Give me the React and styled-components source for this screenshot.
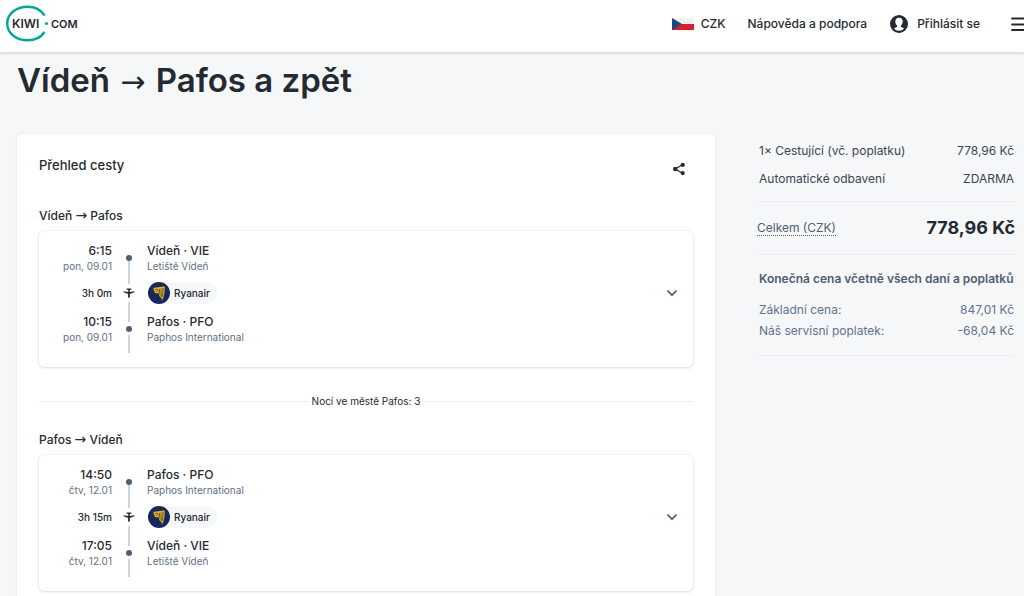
import React from "react";
import styled, { createGlobalStyle } from "styled-components";

const GlobalStyle = createGlobalStyle`
  * {
    box-sizing: border-box;
  }
  body {
    margin: 0;
    background: #f5f7f9;
    color: #252a31;
    font-family: Inter, "Noto Sans", "Liberation Sans", sans-serif;
    font-size: 12px;
    line-height: 16px;
    overflow-x: hidden;
  }
  h1, h2, h3, p, dl, dd {
    margin: 0;
  }
  button {
    border: 0;
    padding: 0;
    background: none;
    color: inherit;
    font: inherit;
    cursor: pointer;
  }
  svg {
    display: block;
    flex: none;
  }
`;

const Header = styled.header`
  display: flex;
  align-items: center;
  justify-content: space-between;
  height: 52px;
  padding: 0 0 5px 6px;
  overflow: hidden;
  background: #fff;
`;

const HeaderShadow = styled.div`
  box-shadow: 0 1px 3px rgba(37, 42, 49, 0.2);
`;

const Nav = styled.nav`
  display: flex;
  align-items: center;
  margin-right: -10px;
`;

const NavButton = styled.button`
  display: flex;
  align-items: center;
  gap: ${(props) => props.$gap || 0}px;
  margin-left: ${(props) => props.$space || 0}px;
  font-weight: 500;
`;

const NavLink = styled.a`
  margin-left: 22px;
  color: inherit;
  font-weight: 500;
  text-decoration: none;
`;

const Title = styled.h1`
  padding: 6px 17px 0;
  font-size: 33px;
  font-weight: 600;
  line-height: 44px;
`;

const Arrow = styled.span`
  margin: 0 ${(props) => props.$space || 0}px;
  font-family: "DejaVu Sans", sans-serif;
  font-size: ${(props) => props.$size}px;
  font-weight: 400;
  line-height: 1;
`;

const Layout = styled.main`
  display: grid;
  grid-template-columns: minmax(0, 698fr) minmax(0, 258fr);
  gap: 42px;
  padding: 32px 9px 0 17px;
`;

const Overview = styled.section`
  padding: 20px 22px 40px;
  background: #fff;
  border-radius: 3px;
  box-shadow: 0 0 2px rgba(37, 42, 49, 0.16);
`;

const OverviewHead = styled.div`
  display: flex;
  justify-content: space-between;
  align-items: flex-end;
  height: 24px;
  margin-bottom: 30px;
  padding-right: 7px;
`;

const Heading = styled.h2`
  padding-bottom: 5px;
  font-size: 13px;
  font-weight: 500;
`;

const ShareButton = styled.button`
  padding-bottom: 2px;
`;

const Route = styled.h3`
  margin-bottom: 7px;
  font-size: 12px;
  font-weight: 500;
`;

const Segment = styled.article`
  display: flex;
  align-items: center;
  justify-content: space-between;
  padding: 11px 15px 14px 8px;
  background: #fff;
  border-radius: 5px;
  box-shadow: 0 0 2px rgba(37, 42, 49, 0.14), 0 1px 3px rgba(37, 42, 49, 0.14);
`;

const Toggle = styled.button`
  padding-bottom: 9px;
`;

const Row = styled.div`
  display: grid;
  grid-template-columns: 65px 35px auto;
  height: ${(props) => (props.$short ? 31 : 40)}px;
`;

const Cell = styled.div`
  text-align: ${(props) => props.$align || "left"};
`;

const Main = styled.p`
  font-size: 12px;
  font-weight: 500;
  line-height: 17px;
`;

const Sub = styled.p`
  color: #5f6f82;
  font-size: 10px;
  line-height: 15px;
`;

const Duration = styled.p`
  font-size: 10px;
  font-weight: 500;
  line-height: 22px;
`;

const Track = styled.div`
  display: flex;
  flex-direction: column;
  align-items: center;
  padding-right: 1px;
`;

const Dot = styled.span`
  width: 6px;
  height: 6px;
  border-radius: 50%;
  background: #4f5e71;
`;

const Line = styled.span`
  width: 2px;
  flex: ${(props) => (props.$size ? `0 0 ${props.$size}px` : 1)};
  background: #cbd4de;
`;

const Space = styled.span`
  flex: 0 0 ${(props) => props.$size}px;
`;

const Carrier = styled.div`
  display: flex;
  align-items: center;
  gap: 4px;
  width: fit-content;
  height: 22px;
  margin-left: 1px;
  padding-right: 7px;
  border-radius: 11px;
  background: #f5f7f9;
  font-size: 10px;
  font-weight: 500;
`;

const Nights = styled.p`
  display: flex;
  align-items: center;
  gap: 3px;
  margin: 26px 0 23px;
  font-size: 10px;
  &::before,
  &::after {
    content: "";
    flex: 1;
    height: 1px;
    background: #eceff2;
  }
`;

const Summary = styled.aside`
  min-width: 0;
  padding-top: 3px;
`;

const Prices = styled.dl`
  padding: 0 1px 0 2px;
  color: ${(props) => (props.$muted ? "#5f738c" : "#3d4550")};
`;

const Price = styled.div`
  display: flex;
  justify-content: space-between;
  line-height: ${(props) => props.$line}px;
  white-space: nowrap;
`;

const Total = styled.div`
  display: flex;
  align-items: center;
  justify-content: space-between;
  height: 54px;
  margin-top: 8px;
  border-top: 1px solid #e8edf1;
  border-bottom: 1px solid #e8edf1;
`;

const TotalLabel = styled.button`
  border-bottom: 1px dotted #4f5e71;
  color: #4f5e71;
  line-height: 14px;
`;

const TotalPrice = styled.strong`
  font-size: 18px;
  font-weight: 700;
`;

const Included = styled.h3`
  padding: 16px 0 12px 2px;
  color: #4f5e71;
  font-size: 12px;
  font-weight: 600;
  white-space: nowrap;
`;

const Divider = styled.hr`
  margin: 14px 1px 0 2px;
  border: 0;
  border-top: 1px solid #e8edf1;
`;

const Logo = () => (
  <svg width="74" height="38" viewBox="0 0 74 38" role="img" aria-label="Kiwi.com">
    <path
      d="M38.500 10.500C35 5 28.500 1.700 21.500 1.700C10 1.700 1.200 9 1.200 18.500C1.200 28 10 35.300 21.500 35.300C28.500 35.300 35 32.500 38.500 27"
      fill="none"
      stroke="#00a991"
      strokeWidth="2.400"
    />
    <circle cx="40.500" cy="18.500" r="1.600" fill="#00a991" />
    <g fill="#252a31" fontFamily="Inter, sans-serif" fontWeight="600">
      <text x="6" y="23" fontSize="12">KIWI</text>
      <text x="45" y="23" fontSize="11">COM</text>
    </g>
  </svg>
);

const Flag = () => (
  <svg width="22" height="12" viewBox="0 0 22 12">
    <path d="M0 0H22V6H0Z" fill="#f1f1f3" />
    <path d="M0 6H22V12H0Z" fill="#d7202b" />
    <path d="M0 0L10 6L0 12Z" fill="#1d477c" />
  </svg>
);

const Account = () => (
  <svg width="18" height="18" viewBox="0 0 18 18">
    <circle cx="9" cy="9" r="9" fill="#252a31" />
    <path
      d="M9 2.800C6.600 2.800 5.300 4.500 5.300 6.600C5.300 8.400 6.100 9.800 7.100 10.600V11.800C6.500 12.500 4.800 12.700 4 13.600C5.300 15.100 7 15.800 9 15.800C11 15.800 12.700 15.100 14 13.600C13.200 12.700 11.500 12.500 10.900 11.800V10.600C11.900 9.800 12.700 8.400 12.700 6.600C12.700 4.500 11.400 2.800 9 2.800Z"
      fill="#fff"
    />
  </svg>
);

const Burger = () => (
  <svg width="24" height="16" viewBox="0 0 24 16">
    <path d="M2 2.500H22M2 8.500H22M2 14H22" stroke="#252a31" strokeWidth="1.800" strokeLinecap="round" />
  </svg>
);

const Share = () => (
  <svg width="14" height="14" viewBox="0 0 14 14">
    <path d="M10.500 2.800L3.200 7L10.500 11.200" fill="none" stroke="#252a31" strokeWidth="1.300" />
    <g fill="#252a31">
      <circle cx="3.200" cy="7" r="2.200" />
      <circle cx="10.700" cy="2.900" r="2.100" />
      <circle cx="10.700" cy="11.100" r="2.100" />
    </g>
  </svg>
);

const Chevron = () => (
  <svg width="12" height="8" viewBox="0 0 12 8">
    <path d="M1.500 1.500L6 6.200L10.500 1.500" fill="none" stroke="#4f5e71" strokeWidth="1.700" />
  </svg>
);

const Plane = () => (
  <svg width="12" height="10" viewBox="0 0 12 10">
    <path
      d="M3.500 0.400H8.500V1.500L6.800 1.900V4L11.300 3.200L11.500 4.200L8 5.600L6.900 5.900V8.600C6.900 9.300 6.500 9.900 6 9.900C5.500 9.900 5.100 9.300 5.100 8.600V5.900L4 5.600L0.500 4.200L0.700 3.200L5.200 4V1.900L3.500 1.500Z"
      fill="#252a31"
    />
  </svg>
);

const Ryanair = () => (
  <svg width="22" height="22" viewBox="0 0 22 22">
    <circle cx="11" cy="11" r="11" fill="#16295d" />
    <path
      d="M5.200 6.300C6.500 5.200 8.300 5.500 9.800 5.200C12 4.700 14.500 4.500 16.800 4.500C16.600 9 16.500 14 14.300 18.500C13.500 16.500 12.500 15 11.200 14L10.500 11L8 11.500L6.600 10.200L5.900 8.200Z"
      fill="#e3b21b"
    />
    <path
      d="M7 7.500C8.500 7 10 7.500 10.500 8.500L8.200 9.600M11.700 6.800C11.300 9 11.400 11 12.100 13.500M13.400 6.500C13 9.500 13 12 13.700 15.500M15.100 6C14.800 9 14.700 12 14.500 14.500"
      fill="none"
      stroke="#16295d"
      strokeWidth="0.600"
    />
  </svg>
);

const trips = [
  {
    duration: "3h 0m",
    from: { time: "6:15", date: "pon, 09.01", name: "Vídeň", code: "VIE", airport: "Letiště Vídeň" },
    to: { time: "10:15", date: "pon, 09.01", name: "Pafos", code: "PFO", airport: "Paphos International" },
  },
  {
    duration: "3h 15m",
    from: { time: "14:50", date: "čtv, 12.01", name: "Pafos", code: "PFO", airport: "Paphos International" },
    to: { time: "17:05", date: "čtv, 12.01", name: "Vídeň", code: "VIE", airport: "Letiště Vídeň" },
  },
];

function Stop({ stop, arrival }) {
  return (
    <Row>
      <Cell $align="right">
        <Main>{stop.time}</Main>
        <Sub>{stop.date}</Sub>
      </Cell>
      <Track>
        {arrival && <Line $size={9} />}
        <Space $size={arrival ? 4 : 13} />
        <Dot />
        {arrival && <Space $size={3} />}
        <Line />
      </Track>
      <Cell>
        <Main>{`${stop.name} · ${stop.code}`}</Main>
        <Sub>{stop.airport}</Sub>
      </Cell>
    </Row>
  );
}

function Trip({ trip }) {
  return (
    <>
      <Route>
        {trip.from.name} <Arrow $size={14}>→</Arrow> {trip.to.name}
      </Route>
      <Segment>
        <div>
          <Stop stop={trip.from} />
          <Row $short>
            <Cell $align="right">
              <Duration>{trip.duration}</Duration>
            </Cell>
            <Track>
              <Line $size={2} />
              <Space $size={4} />
              <Plane />
              <Space $size={4} />
              <Line />
            </Track>
            <Cell>
              <Carrier>
                <Ryanair />
                Ryanair
              </Carrier>
            </Cell>
          </Row>
          <Stop stop={trip.to} arrival />
        </div>
        <Toggle aria-label="Zobrazit detaily">
          <Chevron />
        </Toggle>
      </Segment>
    </>
  );
}

export default function App() {
  return (
    <>
      <GlobalStyle />
      <HeaderShadow>
        <Header>
          <a href="#home">
            <Logo />
          </a>
          <Nav>
            <NavButton $gap={7}>
              <Flag />
              CZK
            </NavButton>
            <NavLink href="#help">Nápověda a podpora</NavLink>
            <NavButton $gap={9} $space={23}>
              <Account />
              Přihlásit se
            </NavButton>
            <NavButton $space={30} aria-label="Menu">
              <Burger />
            </NavButton>
          </Nav>
        </Header>
      </HeaderShadow>
      <Title>
        Vídeň <Arrow $size={30} $space={2}>→</Arrow> Pafos a zpět
      </Title>
      <Layout>
        <Overview>
          <OverviewHead>
            <Heading>Přehled cesty</Heading>
            <ShareButton aria-label="Sdílet">
              <Share />
            </ShareButton>
          </OverviewHead>
          <Trip trip={trips[0]} />
          <Nights>Nocí ve městě Pafos: 3</Nights>
          <Trip trip={trips[1]} />
        </Overview>
        <Summary>
          <Prices>
            <Price $line={28}>
              <dt>1× Cestující (vč. poplatku)</dt>
              <dd>778,96 Kč</dd>
            </Price>
            <Price $line={28}>
              <dt>Automatické odbavení</dt>
              <dd>ZDARMA</dd>
            </Price>
          </Prices>
          <Total>
            <TotalLabel>Celkem (CZK)</TotalLabel>
            <TotalPrice>778,96 Kč</TotalPrice>
          </Total>
          <Included>Konečná cena včetně všech daní a poplatků</Included>
          <Prices $muted>
            <Price $line={21}>
              <dt>Základní cena:</dt>
              <dd>847,01 Kč</dd>
            </Price>
            <Price $line={21}>
              <dt>Náš servisní poplatek:</dt>
              <dd>-68,04 Kč</dd>
            </Price>
          </Prices>
          <Divider />
        </Summary>
      </Layout>
    </>
  );
}
